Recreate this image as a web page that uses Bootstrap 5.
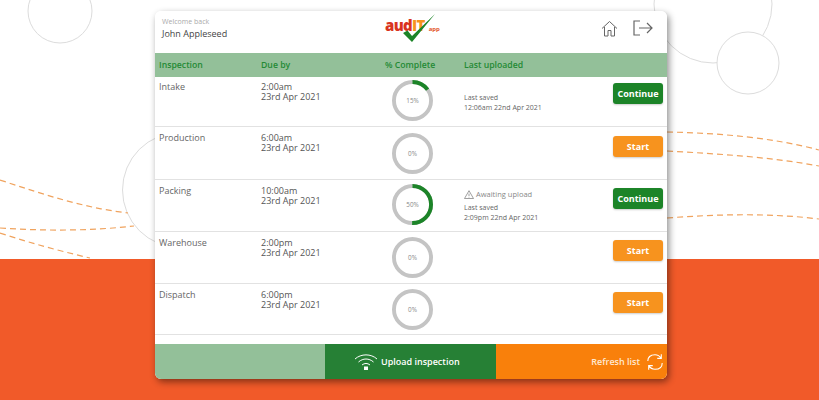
<!DOCTYPE html>
<html lang="en">
<head>
    <meta charset="UTF-8">
    <meta name="viewport" content="width=device-width, initial-scale=1.0">
    <link href="https://cdn.jsdelivr.net/npm/bootstrap@5.3.0/dist/css/bootstrap.min.css" rel="stylesheet">
    <title>audIT app inspections</title>
    <style>
        html, body { height: 400px; overflow: hidden; }
        body { background: #fff; font-family: "Open Sans", "Liberation Sans", sans-serif; color: #555; font-size: 9px; line-height: 10px; }
        .backdrop { position: absolute; left: 0; top: 0; }
        .panel-wrap { position: relative; width: 512px; margin: 11px 0 0 155px; border-radius: 6px; box-shadow: 2px 3px 7px rgba(0,0,0,.45); }
        .panel { position: relative; height: 368px; background: #fff; border-radius: 6px; overflow: hidden; }
        .top-bar { height: 42px; padding: 6px 14px 0 7px; }
        .hello { font-size: 7px; color: #aaa; line-height: 9px; margin-bottom: 2px; }
        .user-name { font-size: 9px; color: #444; line-height: 11px; }
        .logo-box { position: absolute; left: 230px; top: 2px; width: 52px; height: 31px; }
        .logo-text { position: absolute; left: 0; top: 4px; font: 800 15px/16px "Open Sans", sans-serif; letter-spacing: -.7px; color: #d9341f; }
        .logo-text b { color: #f7931e; font-weight: 800; }
        .logo-text i { font-size: 6px; font-style: normal; font-weight: 700; color: #e2552a; letter-spacing: 0; margin-left: 4px; }
        .logo-tick { position: absolute; left: 0; top: 0; }
        .head-icons { gap: 15px; margin-top: 3px; }
        .grid-line { display: grid; grid-template-columns: 102px 124px 79px 149px 50px; padding: 0 4px; }
        .head-line { height: 24px; align-items: center; background: #93c099; color: #248a35; font-weight: 600; font-size: 8.700px; }
        .job-line { border-bottom: 1.500px solid #e2e2e2; padding-top: 6px; }
        .job-a { height: 50px; padding-top: 5px; }
        .job-b { height: 53px; }
        .job-c, .job-e { height: 52px; }
        .job-d { height: 51px; }
        .job-name { color: #666; font-weight: 500; line-height: 10px; }
        .due-text { color: #555; font-weight: 500; line-height: 10px; }
        .ring { display: block; margin-left: 7px; }
        .job-a .ring { margin-top: -2px; }
        .job-c .ring { margin-top: -2px; }
        .job-d .ring, .job-e .ring { margin-top: -1px; }
        .act-btn { margin-top: 2px; }
        .job-a .act-btn { margin-top: 1px; }
        .job-b .act-btn { margin-top: 3px; }
        .ring text { font-size: 6.500px; fill: #888; text-anchor: middle; font-family: "Open Sans", sans-serif; }
        .save-note { font-size: 7px; line-height: 10px; color: #666; }
        .job-a .save-note { padding-top: 11px; }
        .await-note { font-size: 7.500px; color: #888; line-height: 10px; margin: 3px 0 4px; gap: 2px; }
        .act-btn { width: 50px; height: 21px; padding: 0; border: 0; border-radius: 3px; font-size: 9px; font-weight: 700; line-height: 21px; color: #fff; box-shadow: 0 1px 2px rgba(0,0,0,.2); }
        .act-go, .act-go:hover { background: #1c8428; color: #fff; }
        .act-new, .act-new:hover { background: #f7931e; color: #fff; }
        .foot-bar { position: absolute; left: 0; right: 0; bottom: 0; height: 35px; color: #fff; font-weight: 600; font-size: 9px; }
        .foot-a { width: 170px; background: #93c099; }
        .foot-b { width: 171px; background: #268035; gap: 3px; padding-left: 29px; }
        .foot-c { width: 171px; background: #f9800b; gap: 6px; padding-right: 3px; color: #ffe9d2; }
    </style>
</head>
<body>
    <svg class="backdrop" width="819" height="400" fill="none">
        <rect y="259" width="819" height="141" fill="#f15a29"/>
        <g stroke="#dcdcdc" stroke-width="1">
            <circle cx="60" cy="11" r="32"/>
            <circle cx="713" cy="4" r="59"/>
            <circle cx="748" cy="63" r="31" fill="#fff"/>
            <circle cx="180" cy="190" r="57.500"/>
        </g>
        <g stroke="#f0a35e" stroke-width="1.200" stroke-dasharray="6 4">
            <path d="M0 180C45 195 85 208 128 213"/>
            <path d="M0 228C45 231 90 231 134 226"/>
            <path d="M0 233C30 243 60 251 90 258"/>
            <path d="M667 132C720 133 775 138 819 150"/>
            <path d="M667 151C720 154 770 157 819 166"/>
            <path d="M667 218C720 214 770 213 819 219"/>
        </g>
    </svg>

    <div class="panel-wrap">
        <div class="panel">
            <div class="top-bar d-flex justify-content-between">
                <div>
                    <div class="hello">Welcome back</div>
                    <div class="user-name">John Appleseed</div>
                </div>
                <div class="head-icons d-flex align-items-start">
                    <svg width="17" height="17" viewBox="0 0 17 17" fill="none" stroke="#666" stroke-width="1"><path d="M1 8.500 8.500 1.500 16 8.500M3.500 7V16H7V10.500H10V16H13.500V7"/></svg>
                    <svg width="20" height="16" viewBox="0 0 20 16" fill="none" stroke="#666" stroke-width="1.200"><path d="M7 1H1V15H7M6 8H19M14 3l5 5-5 5"/></svg>
                </div>
            </div>
            <div class="logo-box">
                <div class="logo-text">aud<b>IT</b><i>app</i></div>
                <svg class="logo-tick" width="52" height="31" viewBox="0 0 52 31" fill="none"><path d="M18 20 22.500 17.500 27 23 50 1 27 29Z" fill="#1c8428"/></svg>
            </div>

            <div class="grid-line head-line">
                <div>Inspection</div><div>Due by</div><div>% Complete</div><div>Last uploaded</div>
            </div>

            <div class="grid-line job-line job-a">
                <div class="job-name">Intake</div>
                <div class="due-text">2:00am<br>23rd Apr 2021</div>
                <svg class="ring" width="41" height="41" viewBox="0 0 42 42" fill="none"><circle cx="21" cy="21" r="19" stroke="#c4c4c4" stroke-width="4"/><circle cx="21" cy="21" r="19" stroke="#1c8428" stroke-width="4" stroke-dasharray="17.900 119.400" transform="rotate(-90 21 21)"/><text x="21" y="23.500">15%</text></svg>
                <div class="save-note">Last saved<br>12:06am 22nd Apr 2021</div>
                <div><button class="btn act-btn act-go">Continue</button></div>
            </div>

            <div class="grid-line job-line job-b">
                <div class="job-name">Production</div>
                <div class="due-text">6:00am<br>23rd Apr 2021</div>
                <svg class="ring" width="41" height="41" viewBox="0 0 42 42" fill="none"><circle cx="21" cy="21" r="19" stroke="#c4c4c4" stroke-width="4"/><text x="21" y="23.500">0%</text></svg>
                <div></div>
                <div><button class="btn act-btn act-new">Start</button></div>
            </div>

            <div class="grid-line job-line job-c">
                <div class="job-name">Packing</div>
                <div class="due-text">10:00am<br>23rd Apr 2021</div>
                <svg class="ring" width="41" height="41" viewBox="0 0 42 42" fill="none"><circle cx="21" cy="21" r="19" stroke="#c4c4c4" stroke-width="4"/><circle cx="21" cy="21" r="19" stroke="#1c8428" stroke-width="4" stroke-dasharray="59.700 119.400" transform="rotate(-90 21 21)"/><text x="21" y="23.500">50%</text></svg>
                <div>
                    <div class="await-note d-flex align-items-center"><svg width="10" height="9" viewBox="0 0 10 9" fill="none" stroke="#777" stroke-width=".7"><path d="M5 .7 9.500 8.500H.5ZM5 3.500V6M5 6.800V7.500"/></svg>Awaiting upload</div>
                    <div class="save-note">Last saved<br>2:09pm 22nd Apr 2021</div>
                </div>
                <div><button class="btn act-btn act-go">Continue</button></div>
            </div>

            <div class="grid-line job-line job-e">
                <div class="job-name">Warehouse</div>
                <div class="due-text">2:00pm<br>23rd Apr 2021</div>
                <svg class="ring" width="41" height="41" viewBox="0 0 42 42" fill="none"><circle cx="21" cy="21" r="19" stroke="#c4c4c4" stroke-width="4"/><text x="21" y="23.500">0%</text></svg>
                <div></div>
                <div><button class="btn act-btn act-new">Start</button></div>
            </div>

            <div class="grid-line job-line job-d">
                <div class="job-name">Dispatch</div>
                <div class="due-text">6:00pm<br>23rd Apr 2021</div>
                <svg class="ring" width="41" height="41" viewBox="0 0 42 42" fill="none"><circle cx="21" cy="21" r="19" stroke="#c4c4c4" stroke-width="4"/><text x="21" y="23.500">0%</text></svg>
                <div></div>
                <div><button class="btn act-btn act-new">Start</button></div>
            </div>

            <div class="foot-bar d-flex">
                <div class="foot-a"></div>
                <div class="foot-b d-flex align-items-center">
                    <svg width="24" height="18" viewBox="0 0 24 18" fill="none" stroke="#fff" stroke-width="1"><path d="M1 6C7 .5 17 .5 23 6M4.500 9C9 5 15 5 19.500 9M8 12C10.500 10 13.500 10 16 12"/><rect x="10" y="13.500" width="4" height="3.500" fill="#fff" stroke="none"/></svg>
                    <span>Upload inspection</span>
                </div>
                <div class="foot-c d-flex align-items-center justify-content-end">
                    <span>Refresh list</span>
                    <svg width="18" height="18" viewBox="0 0 20 20" fill="none" stroke="#fff" stroke-width="1.200"><path d="M2 9C2 4 6 2 10 2c3 0 5 1 7 4M17 1.500V6H12.500M18 11c0 5-4 7-8 7-3 0-5-1-7-4M3 18.500V14H7.500"/></svg>
                </div>
            </div>
        </div>
    </div>
</body>
</html>
